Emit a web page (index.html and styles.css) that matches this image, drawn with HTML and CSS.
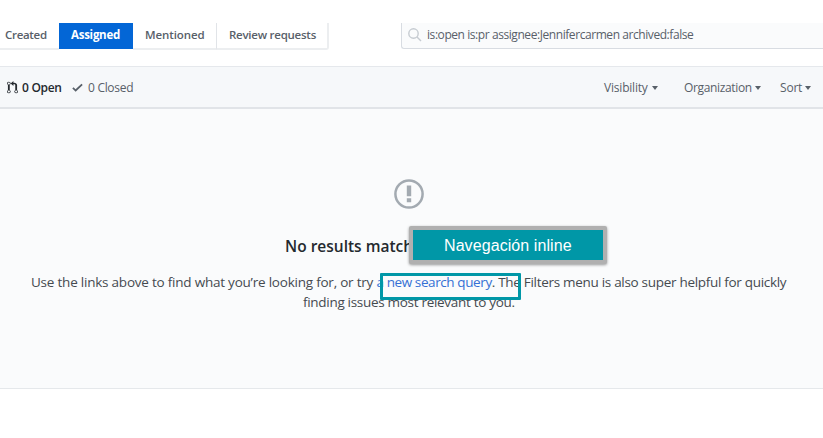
FILE: index.html
```html
<!DOCTYPE html>
<html lang="en">
<head>
<meta charset="utf-8">
<title>Pull requests</title>
<link rel="stylesheet" href="styles.css">
</head>
<body>
<header class="subnav">
  <nav class="tabs">
    <a class="tab tab-created"><span>Created</span></a>
    <a class="tab tab-assigned"><span>Assigned</span></a>
    <a class="tab tab-mentioned"><span>Mentioned</span></a>
    <a class="tab tab-review"><span>Review requests</span></a>
  </nav>
  <div class="search">
    <svg class="search-icon" viewBox="0 0 14 14"><circle cx="5.5" cy="5.5" r="4.7"/><path d="M9 9l4 4"/></svg>
    <span class="query">is:open is:pr assignee:Jennifercarmen archived:false</span>
  </div>
</header>
<section class="toolbar">
  <svg class="pr-icon" viewBox="0 0 12 16" preserveAspectRatio="none"><path d="M11 11.28V5c-.03-.78-.34-1.47-.94-2.06C9.46 2.35 8.78 2.03 8 2H7V0L4 3l3 3V4h1c.27.02.48.11.69.31.21.2.3.42.31.69v6.28A1.993 1.993 0 0 0 10 15a1.993 1.993 0 0 0 1-3.72zm-1 2.92c-.66 0-1.2-.55-1.2-1.2 0-.65.55-1.2 1.2-1.2.65 0 1.2.55 1.2 1.2 0 .65-.55 1.2-1.2 1.2zM4 3c0-1.11-.89-2-2-2a1.993 1.993 0 0 0-1 3.72v6.56A1.993 1.993 0 0 0 2 15a1.993 1.993 0 0 0 1-3.72V4.72c.59-.34 1-.98 1-1.72zm-.8 10c0 .66-.55 1.2-1.2 1.2-.65 0-1.2-.55-1.2-1.2 0-.65.55-1.2 1.2-1.2.65 0 1.2.55 1.2 1.2zM2 4.2C1.34 4.2.8 3.65.8 3c0-.65.55-1.2 1.2-1.2.65 0 1.2.55 1.2 1.2 0 .65-.55 1.2-1.2 1.2z"/></svg>
  <span class="open">0 Open</span>
  <svg class="check-icon" viewBox="0 0 12 9"><path d="M1 4.8l3 3L11 1"/></svg>
  <span class="closed">0 Closed</span>
  <div class="filters">
    <span class="filter visibility">Visibility</span>
    <span class="filter organization">Organization</span>
    <span class="filter sort">Sort</span>
  </div>
</section>
<main class="blank">
  <svg class="alert-icon" viewBox="0 0 30 30"><circle cx="15" cy="15" r="13.6"/><path d="M12.8 6.5h4.4v10.7h-4.4zM12.8 19.2h4.4v4h-4.4z"/></svg>
  <h3 class="title">No results match</h3>
  <p class="help"><span class="line line-first"><span class="lead">Use the links above to find what you’re looking for, or try </span><a>a new search query</a>. The Filters menu is also super helpful for quickly</span><span class="line line-second">finding issues most relevant to you.</span></p>
</main>
<div class="highlight"></div>
<div class="callout">Navegación inline</div>
</body>
</html>
```
FILE: styles.css
```css
* { box-sizing: border-box; }
body { margin: 0; width: 823px; height: 438px; overflow: hidden; position: relative; background: #fff; color: #586069; font: 12px/20px "Open Sans", "Noto Sans", sans-serif; }
.subnav { display: flex; height: 66px; padding-top: 23px; white-space: nowrap; }
.tabs { display: flex; width: 401px; height: 26px; }
.tab { height: 27px; padding-top: 2px; border-bottom: 2px solid #eceef0; font-weight: 600; font-size: 11.5px; letter-spacing: -0.25px; }
.tab-created { width: 59px; padding-left: 5px; letter-spacing: -0.3px; }
.tab-assigned { width: 74px; padding-left: 12px; height: 26px; border: 0; background: #0366d6; color: #fff; font-weight: 700; }
.tab-mentioned { width: 84px; padding-left: 12px; border-right: 1px solid #e1e4e8; letter-spacing: -0.1px; }
.tab-review { width: 112px; padding-left: 12px; border-right: 2px solid #eceef0; border-bottom-right-radius: 3px; }
.search { display: flex; flex: 1; height: 26px; padding-left: 6px; background: #fafbfc; border-left: 1px solid #d8dce2; border-bottom: 1px solid #d8dce2; border-bottom-left-radius: 3px; }
.search-icon { width: 14px; height: 14px; margin-top: 5px; fill: none; stroke: #c6cbd1; stroke-width: 1.4; }
.query { margin: 2px 0 0 5px; letter-spacing: -0.43px; }
.toolbar { display: flex; align-items: center; height: 43px; padding: 1px 12px 0 7px; background: #f6f8fa; border-top: 1px solid #e5e8ec; border-bottom: 2px solid #e1e4e8; white-space: nowrap; }
.pr-icon { width: 11px; height: 13px; margin-right: 4px; fill: #24292e; }
.open { width: 50px; color: #24292e; font-weight: 600; letter-spacing: -0.3px; }
.check-icon { width: 11px; height: 9px; margin-right: 5px; fill: none; stroke: #586069; stroke-width: 2; }
.closed { letter-spacing: -0.3px; }
.filters { display: flex; margin-left: auto; }
.filter { display: flex; align-items: center; }
.filter::after { content: ""; margin-left: auto; border: 3.5px solid transparent; border-top: 4px solid #586069; border-bottom: 0; }
.visibility { width: 54px; margin-right: 26px; letter-spacing: -0.2px; }
.organization { width: 77px; margin-right: 19px; letter-spacing: -0.35px; }
.sort { width: 31px; letter-spacing: -0.2px; }
.blank { height: 280px; padding-top: 70px; background: #fafbfc; border-bottom: 1px solid #e5e8eb; display: flex; flex-direction: column; align-items: center; }
.alert-icon { width: 30px; height: 30px; margin-right: 6px; fill: #a3aab1; }
.alert-icon circle { fill: none; stroke: #a3aab1; stroke-width: 2.5; }
.title { align-self: flex-start; margin: 25px 0 0 285px; color: #24292e; font-size: 15.5px; line-height: 25px; font-weight: 600; white-space: nowrap; }
.help { margin: 13px 0 0; width: 100%; color: #454a50; font-size: 13.5px; line-height: 20px; letter-spacing: -0.3px; white-space: nowrap; }
.lead { letter-spacing: -0.22px; }
.help a { color: #3570d4; letter-spacing: -0.4px; }
.line { display: block; }
.line-first { margin-left: 31px; }
.line-second { margin-left: 303px; }
.highlight { position: absolute; left: 380px; top: 273px; width: 141px; height: 27px; border: 3px solid #0097a7; border-radius: 1px; }
.callout { position: absolute; left: 409px; top: 226px; width: 198px; height: 38px; border: 4px solid #b0b0b0; border-radius: 2px; background: #0097a7; box-shadow: 0 1px 3px rgba(0,0,0,.4); color: #fff; font: 16px/31px "Liberation Sans", sans-serif; letter-spacing: 0.08px; padding-left: 31px; white-space: nowrap; }
```
